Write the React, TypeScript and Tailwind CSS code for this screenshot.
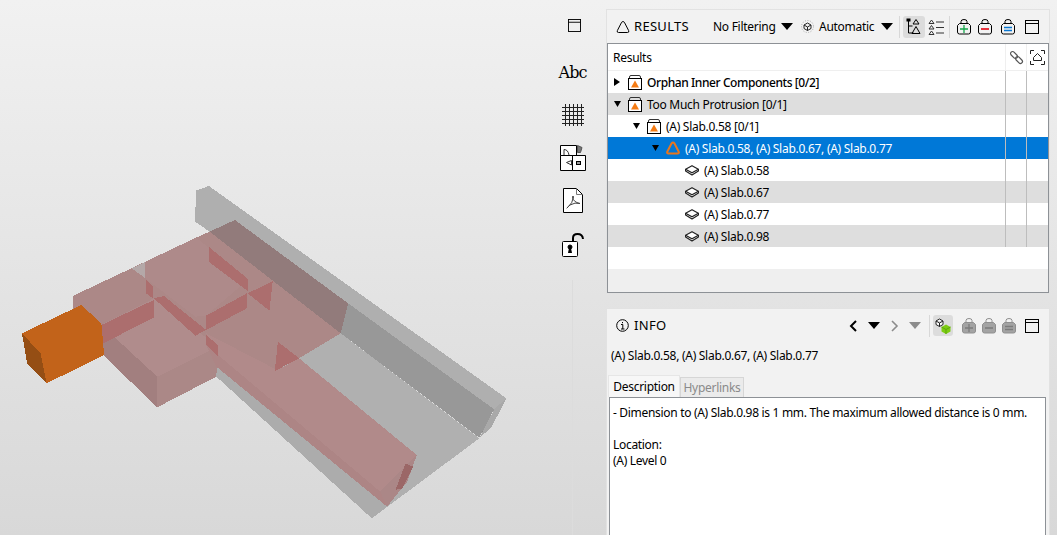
import type { ReactNode } from "react";

const UI_FONT = "font-['Noto_Sans',sans-serif]";

type ModelFace = { points: string; fill: string };

const modelFaces: ModelFace[] = [
  // grey beam and floor
  { points: "580,62 618,48 1498,685 1462,718 1030,400 695,150 620,185 577,155", fill: "#afafaf" },
  { points: "1498,685 1462,718 1418,805 1455,770", fill: "#a9a9a9" },
  { points: "1030,400 1462,718 1418,803 1008,490", fill: "#989898" },
  { points: "1462,718 1418,803 1440,760", fill: "#8a8a8a" },
  { points: "1008,490 1418,805 1100,1045 640,620 640,560 885,565", fill: "#b0b0b0" },
  { points: "640,560 1145,1010 1100,1045 640,620", fill: "#acacac" },
  // pink blocks
  { points: "215,378 430,275 580,203 620,185 1008,490 885,565 813,603 640,560 300,465 215,415", fill: "#ac8887" },
  { points: "430,275 580,203 735,328 610,437 578,440 430,325", fill: "#ae8a8a" },
  { points: "620,185 695,150 1030,400 1008,490", fill: "#927b7b" },
  { points: "390,295 430,275 430,325", fill: "#b4a8a8" },
  { points: "300,465 465,620 465,712 305,555", fill: "#a27f7f" },
  { points: "465,620 645,530 640,620 465,712", fill: "#ab8887" },
  { points: "300,465 455,385 645,530 465,620", fill: "#b08c8c" },
  { points: "610,490 820,600 885,565 1233,855 1125,965 640,560", fill: "#b18a8a" },
  { points: "610,525 1125,965 1145,1010 640,590", fill: "#ad8585" },
  { points: "1233,855 1125,965 1145,1010 1205,935", fill: "#ab8787" },
  // overlaps
  { points: "300,465 455,390 455,443 305,520", fill: "#ac6e6e" },
  { points: "432,330 452,350 452,385 432,370", fill: "#ac6e6e" },
  { points: "455,385 485,378 610,480 578,497", fill: "#ac6e6e" },
  { points: "617,230 735,328 735,365 617,275", fill: "#ac6e6e" },
  { points: "610,437 730,370 730,415 610,480", fill: "#ac6e6e" },
  { points: "733,370 807,333 797,422", fill: "#ac6e6e" },
  { points: "822,515 885,565 813,603", fill: "#ac6e6e" },
  { points: "610,495 645,525 645,560 610,525", fill: "#ac6e6e" },
  { points: "1200,880 1222,890 1190,955 1170,960", fill: "#9b6767" },
  // orange element
  { points: "65,490 240,405 300,460 308,555 138,640 120,550", fill: "#c2631a" },
  { points: "65,490 120,550 138,640 80,580", fill: "#954e14" },
];

function ArrowDown({ grey = false }: { grey?: boolean }) {
  return (
    <svg width="12" height="7" viewBox="0 0 12 7" className="shrink-0">
      <path d="M0 0h12L6 7z" fill={grey ? "#8c8c8c" : "#000"} />
    </svg>
  );
}

function WindowIcon({ size = 14 }: { size?: number }) {
  return (
    <svg width={size} height={size} viewBox="0 0 14 14" className="shrink-0" fill="none" stroke="#000">
      <rect x="0.5" y="0.5" width="13" height="13" />
      <path d="M0.5 3.5h13" />
    </svg>
  );
}

function BagIcon({ mark, color, grey = false }: { mark: "plus" | "minus" | "equal"; color: string; grey?: boolean }) {
  const line = grey ? "#8f8f8f" : "#000";
  return (
    <svg width="14" height="16" viewBox="0 0 14 16" className="shrink-0">
      <path d="M4 5V2.500Q4 .5 7 .5T10 2.500V5" fill="none" stroke={line} />
      <path d="M2.500 4.500h9l2 2v6.500q0 2-2 2h-9q-2 0-2-2V6.500z" fill={grey ? "#a3a3a3" : "none"} stroke={line} />
      {mark === "plus" && <path d="M3 10h8M7 6v8" stroke={color} strokeWidth="1.300" />}
      {mark === "minus" && <path d="M3 10h8" stroke={color} strokeWidth="1.600" />}
      {mark === "equal" && <path d="M3 8.500h8M3 11.500h8" stroke={color} strokeWidth="1.300" />}
    </svg>
  );
}

function TriangleOutline({ color = "#000", width = 1 }: { color?: string; width?: number }) {
  return (
    <svg width="14" height="14" viewBox="0 0 14 14" className="shrink-0">
      <path d="M5.600 2.300Q7 .6 8.400 2.300L12.600 10.500Q13.500 12.500 11.500 12.500H2.500Q.5 12.500 1.400 10.500z" fill="none" stroke={color} strokeWidth={width} />
    </svg>
  );
}

function IssueFolder() {
  return (
    <svg width="14" height="15" viewBox="0 0 14 15" className="shrink-0">
      <path d="M1.500 4V2Q1.500 .5 3 .5h8Q12.500 .5 12.500 2V4" fill="none" stroke="#333" />
      <rect x="0.5" y="3.500" width="13" height="11" fill="#fff" stroke="#000" />
      <path d="M7 5.500L11 12.500H3z" fill="#f57c14" />
    </svg>
  );
}

function SlabIcon() {
  return (
    <svg width="14" height="11" viewBox="0 0 14 11" className="shrink-0">
      <path d="M7 .7L13.400 4.200V6L7 10 .6 6V4.200z" fill="#fff" stroke="#222" strokeWidth="1.200" strokeLinejoin="round" />
      <path d="M.6 4.200L7 7.800l6.400-3.600" fill="none" stroke="#222" strokeWidth="1.200" />
    </svg>
  );
}

function CaretRight() {
  return (
    <svg width="6" height="8" viewBox="0 0 6 8" className="shrink-0">
      <path d="M0 0l6 4-6 4z" fill="#000" />
    </svg>
  );
}

function CaretDown() {
  return (
    <svg width="7" height="6" viewBox="0 0 7 6" className="shrink-0">
      <path d="M0 0h7L3.500 6z" fill="#000" />
    </svg>
  );
}

function SideToolbar() {
  return (
    <div className="flex h-full w-[29px] shrink-0 flex-col items-center pt-[19px]">
      <span className="ml-[4px] flex">
        <WindowIcon size={13} />
      </span>
      <span className="mt-[31px] h-[20px] text-[16px] leading-[20px] tracking-[-1px] text-black font-['DejaVu_Serif',serif]">Abc</span>
      <svg width="22" height="22" viewBox="0 0 22 22" className="mt-[21px] shrink-0" stroke="#222" fill="none">
        <path d="M3.500 0v22M7.500 0v22M11.500 0v22M15.500 0v22M19.500 0v22M0 3.500h22M0 7.500h22M0 11.500h22M0 15.500h22M0 19.500h22" />
      </svg>
      <svg width="26" height="26" viewBox="0 0 26 26" className="mt-[19px] shrink-0" fill="none" stroke="#000">
        <path d="M.5 .5h16v10H.5z" fill="#fff" />
        <path d="M.5 10.500h12v15H.5zM12.500 10.500h13v15h-13z" fill="#fff" />
        <path d="M4 10V4.500Q8 4.500 9 10" stroke="#333" />
        <path d="M17.500 .5l4.500 2-1.500 5h-3z" fill="#777" stroke="#555" />
        <path d="M11.500 15.500l-5 2 5 2.500z" stroke="#333" />
        <rect x="16.500" y="16.500" width="4" height="3" fill="#999" />
      </svg>
      <svg width="20" height="25" viewBox="0 0 20 25" className="mt-[17px] shrink-0" fill="none" stroke="#000">
        <path d="M.5 .5h13l6 6v18H.5z" fill="#fff" />
        <path d="M13.500 .5v6h6" stroke="#777" />
        <path d="M4 20Q10 15 10.500 9 10 7 9.500 9 10 14 17 15.500 12 14 7 17 3 21 4 20z" stroke="#444" />
      </svg>
      <svg width="22" height="24" viewBox="0 0 22 24" className="mt-[20px] shrink-0" fill="none" stroke="#000">
        <path d="M11 9V5Q11 1 15.500 1 20.500 1 21 6" strokeWidth="2" />
        <rect x="0.500" y="8.500" width="15" height="15" rx="1" fill="#fff" />
        <circle cx="8" cy="14" r="2" fill="#000" />
        <path d="M6 20h4l-1-5H7z" fill="#000" stroke="none" />
      </svg>
      <div className="mt-[23px] w-px flex-1 bg-[#dcdcdc]" />
    </div>
  );
}

function ToolbarDivider({ className }: { className: string }) {
  return <div className={`h-[22px] w-px shrink-0 bg-[#d8d8d8] ${className}`} />;
}

function TreeRow({
  indent,
  caret,
  icon,
  label,
  tone,
  medium = false,
}: {
  indent: string;
  caret?: ReactNode;
  icon: ReactNode;
  label: string;
  tone: "white" | "grey" | "selected";
  medium?: boolean;
}) {
  const background = tone === "selected" ? "bg-[#0078d7] text-white" : tone === "grey" ? "bg-[#dedede] text-black" : "bg-white text-black";
  return (
    <div className={`flex h-[22px] items-center ${background}`}>
      <div className={`flex w-[397px] items-center ${indent}`}>
        <span className="flex w-[14px] shrink-0 items-center">{caret}</span>
        {icon}
        <span className={`ml-[5px] whitespace-nowrap pt-[2px] ${medium ? "font-medium tracking-[-0.42px]" : ""}`}>{label}</span>
      </div>
      <div className="h-full w-[21px] border-l border-[#bdbdbd]" />
      <div className="h-full w-[21px] border-l border-[#bdbdbd]" />
    </div>
  );
}

function ResultsPanel() {
  return (
    <section className="flex h-[285px] flex-col border border-[#e2e2e2] bg-[#f2f2f2]">
      <div className="flex h-[33px] items-center pl-[9px]">
        <TriangleOutline />
        <span className="ml-[4px] w-[79px] text-[13px] tracking-[0.3px] text-black">RESULTS</span>
        <span className="w-[62px] whitespace-nowrap text-black">No Filtering</span>
        <span className="ml-[6px]"><ArrowDown /></span>
        <svg width="13" height="13" viewBox="0 0 13 13" className="ml-[8px] shrink-0" fill="none" stroke="#222">
          <circle cx="6.500" cy="6.500" r="6" stroke="#aaa" strokeDasharray="1 1.500" />
          <path d="M6.500 3L10 5v3.500L6.500 10.500 3 8.500V5zM3 5l3.500 2L10 5M6.500 7v3.500" />
        </svg>
        <span className="ml-[5px] w-[56px] text-black">Automatic</span>
        <span className="ml-[6px]"><ArrowDown /></span>
        <ToolbarDivider className="ml-[6px]" />
        <div className="ml-[3px] flex h-[22px] w-[22px] shrink-0 items-center justify-center rounded-[3px] bg-[#dcdcdc]">
          <svg width="16" height="18" viewBox="0 0 16 18" fill="none" stroke="#000">
            <path d="M2.500 2v13h5M2.500 8h4" />
            <path d="M10 1.500l3 4.500H7zM10 8.500l4 7H6z" />
            <rect x="1" y="1" width="3" height="2" fill="#000" />
          </svg>
        </div>
        <svg width="16" height="16" viewBox="0 0 16 16" className="ml-[3px] shrink-0" fill="none" stroke="#333">
          <path d="M3.500 1L6 4.500H1zM3.500 6.500L6 10H1zM3.500 12L6 15.500H1zM8 3h8M8 8.500h8M8 14h8" />
        </svg>
        <ToolbarDivider className="ml-[5px]" />
        <span className="ml-[7px]"><BagIcon mark="plus" color="#14a64b" /></span>
        <span className="ml-[7px]"><BagIcon mark="minus" color="#e3000f" /></span>
        <span className="ml-[9px]"><BagIcon mark="equal" color="#0a78d2" /></span>
        <span className="ml-[10px]"><WindowIcon /></span>
      </div>
      <div className="flex-1 border border-[#8d9196] bg-[#efefef]">
        <div className="flex h-[27px] items-center border-b border-[#efefef] bg-white text-black">
          <span className="w-[397px] pl-[5px] pt-[2px]">Results</span>
          <div className="flex h-full w-[21px] items-center justify-center border-l border-[#efefef]">
            <svg width="15" height="15" viewBox="0 0 15 15" fill="none" stroke="#555" strokeWidth="1.200">
              <rect x="1" y="3" width="8" height="4" rx="2" transform="rotate(45 5 5)" />
              <rect x="6" y="8" width="8" height="4" rx="2" transform="rotate(45 10 10)" />
            </svg>
          </div>
          <div className="flex h-full w-[21px] items-center justify-center border-l border-[#efefef]">
            <svg width="15" height="15" viewBox="0 0 15 15" fill="none" stroke="#222">
              <path d="M.5 4V.5H4M11 .5h3.500V4M14.500 11v3.500H11M4 14.500H.5V11M7.500 3.500l4 4v3h-8v-3z" />
            </svg>
          </div>
        </div>
        <TreeRow indent="pl-[6px]" caret={<CaretRight />} icon={<IssueFolder />} label="Orphan Inner Components [0/2]" tone="white" medium />
        <TreeRow indent="pl-[6px]" caret={<CaretDown />} icon={<IssueFolder />} label="Too Much Protrusion [0/1]" tone="grey" />
        <TreeRow indent="pl-[25px]" caret={<CaretDown />} icon={<IssueFolder />} label="(A) Slab.0.58 [0/1]" tone="white" />
        <TreeRow indent="pl-[44px]" caret={<CaretDown />} icon={<TriangleOutline color="#e8761e" width={2} />} label="(A) Slab.0.58, (A) Slab.0.67, (A) Slab.0.77" tone="selected" />
        <TreeRow indent="pl-[63px]" icon={<SlabIcon />} label="(A) Slab.0.58" tone="white" />
        <TreeRow indent="pl-[63px]" icon={<SlabIcon />} label="(A) Slab.0.67" tone="grey" />
        <TreeRow indent="pl-[63px]" icon={<SlabIcon />} label="(A) Slab.0.77" tone="white" />
        <TreeRow indent="pl-[63px]" icon={<SlabIcon />} label="(A) Slab.0.98" tone="grey" />
        <div className="h-[22px] bg-white" />
      </div>
    </section>
  );
}

function InfoPanel() {
  return (
    <section className="mt-[14px] flex flex-1 flex-col border border-b-0 border-[#e2e2e2] bg-[#f2f2f2]">
      <div className="flex h-[33px] items-center pl-[9px]">
        <svg width="13" height="13" viewBox="0 0 13 13" className="shrink-0" fill="none" stroke="#000">
          <circle cx="6.500" cy="6.500" r="5.800" />
          <path d="M5 5.500h1.800V10M5 10h3.500M6.500 3v1.200" />
        </svg>
        <span className="ml-[5px] w-[215px] text-[13px] tracking-[0.3px] text-black">INFO</span>
        <svg width="8" height="12" viewBox="0 0 8 12" className="shrink-0" fill="none" stroke="#000" strokeWidth="2">
          <path d="M7 1L2 6l5 5" />
        </svg>
        <span className="ml-[11px]"><ArrowDown /></span>
        <svg width="8" height="12" viewBox="0 0 8 12" className="ml-[11px] shrink-0" fill="none" stroke="#8c8c8c" strokeWidth="1.600">
          <path d="M1 1l5 5-5 5" />
        </svg>
        <span className="ml-[10px]"><ArrowDown grey /></span>
        <ToolbarDivider className="ml-[8px]" />
        <div className="ml-[3px] flex h-[21px] w-[20px] shrink-0 items-center justify-center rounded-[3px] bg-[#dcdcdc]">
          <svg width="16" height="16" viewBox="0 0 16 16">
            <path d="M4.500 1L8 3v3.500L4.500 8.500 1 6.500V3zM1 3l3.500 2L8 3M4.500 5v3.500" fill="#fff" stroke="#222" />
            <path d="M11 6.500L15.500 9v4.500L11 16l-4.500-2.500V9z" fill="#7ccc12" />
            <path d="M6.500 9L11 11.500 15.500 9M11 11.500V16" fill="none" stroke="#5da60c" />
          </svg>
        </div>
        <span className="ml-[9px]"><BagIcon mark="plus" color="#7c7c7c" grey /></span>
        <span className="ml-[6px]"><BagIcon mark="minus" color="#7c7c7c" grey /></span>
        <span className="ml-[6px]"><BagIcon mark="equal" color="#7c7c7c" grey /></span>
        <span className="ml-[9px]"><WindowIcon /></span>
      </div>
      <div className="mt-[5px] pl-[4px] text-black">(A) Slab.0.58, (A) Slab.0.67, (A) Slab.0.77</div>
      <div className="mt-[10px] flex h-[22px] items-end pl-[1px]">
        <span className="flex h-[22px] w-[72px] items-center justify-center border border-b-0 border-[#e6e6e6] bg-[#f7f7f7] text-black">Description</span>
        <span className="flex h-[20px] w-[64px] items-center justify-center border border-b-0 border-[#d6d6d6] bg-[#ebebeb] text-[#8a8a8a]">Hyperlinks</span>
      </div>
      <div className="ml-[2px] mr-[3px] flex-1 border border-b-0 border-[#8d9196] bg-white px-[3px] pt-[7px] leading-[16px] tracking-[-0.31px] text-black">
        <p>- Dimension to (A) Slab.0.98 is 1 mm. The maximum allowed distance is 0 mm.</p>
        <p className="mt-[16px]">Location:</p>
        <p>(A) Level 0</p>
      </div>
    </section>
  );
}

export default function App() {
  return (
    <div className={`flex h-[535px] w-[1057px] overflow-hidden bg-gradient-to-b from-[#f1f1f1] to-[#d8d8d8] text-[12px] tracking-[-0.28px] ${UI_FONT}`}>
      <div className="w-[558px] shrink-0 pt-[170px]">
        <svg width="530" height="365" viewBox="0 0 1568 1095" preserveAspectRatio="none" shapeRendering="crispEdges">
          {modelFaces.map((face) => (
            <polygon key={face.points} points={face.points} fill={face.fill} />
          ))}
        </svg>
      </div>
      <SideToolbar />
      <div className="ml-[19px] flex w-[444px] shrink-0 flex-col pt-[9px]">
        <ResultsPanel />
        <InfoPanel />
      </div>
    </div>
  );
}
